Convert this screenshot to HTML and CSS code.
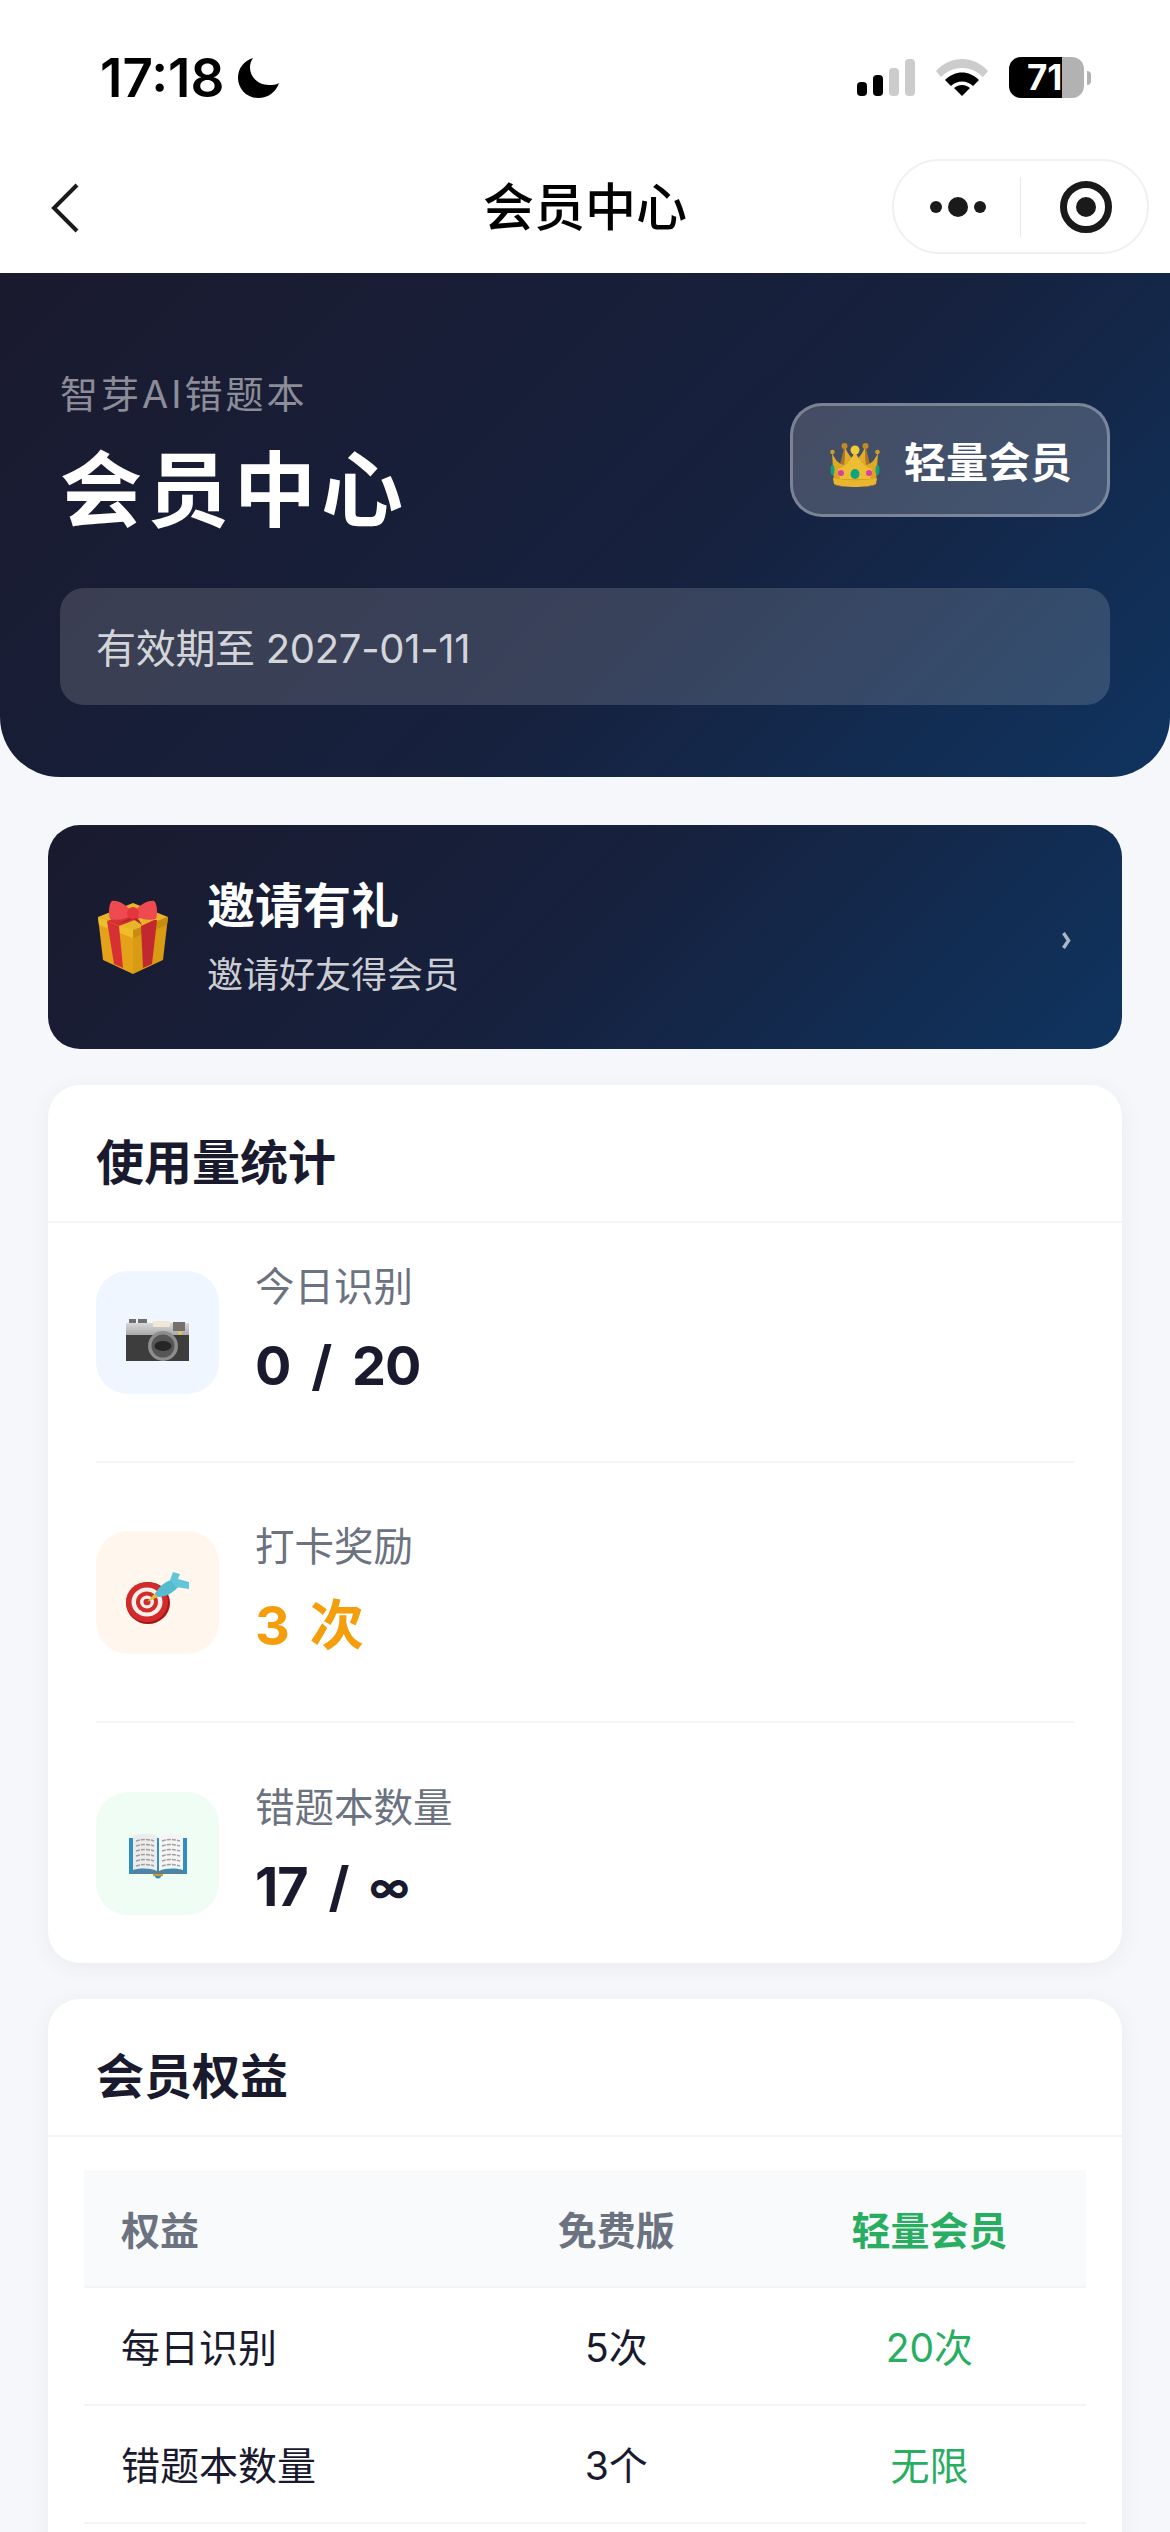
FILE: index.html
```html
<!DOCTYPE html>
<html lang="zh-CN">
<head>
<meta charset="utf-8">
<title>会员中心</title>
<link rel="stylesheet" href="styles.css">
</head>
<body>
<div class="screen">
  <header class="top">
    <div class="status">
      <div class="status-left">
        <span class="time">17:18</span>
        <svg class="moon" viewBox="0 0 41 40"><path d="M15 0C6 3 0 10 0 20c0 11 9 20 20 20 10 0 18-6 21-15-3 2-7 2-10 2C20 27 12 19 12 9c0-3 1-6 3-9z" fill="#000"/></svg>
      </div>
      <div class="status-right">
        <svg class="signal" viewBox="0 0 58 37"><rect x="0" y="23" width="10" height="14" rx="4" fill="#000"/><rect x="16" y="16" width="10" height="21" rx="4" fill="#000"/><rect x="32" y="9" width="10" height="28" rx="4" fill="#ccc"/><rect x="48" y="0" width="10" height="37" rx="4" fill="#ccc"/></svg>
        <svg class="wifi" viewBox="0 0 52 37"><path d="M0 12C14-4 38-4 52 12l-5 6C35 6 17 6 5 18z" fill="#ccc"/><path d="M9 21c10-10 24-10 34 0l-6 6c-6-6-16-6-22 0z" fill="#000"/><path d="M18 29c5-4 11-4 16 0L26 37z" fill="#000"/></svg>
        <div class="battery">
          <div class="battery-body"><span class="battery-level">71</span></div>
          <div class="battery-nub"></div>
        </div>
      </div>
    </div>
    <nav class="nav">
      <svg class="back" viewBox="0 0 28 50"><path d="M26 2 3 25l23 23" fill="none" stroke="#1a1a1a" stroke-width="4"/></svg>
      <div class="nav-title">会员中心</div>
      <div class="capsule">
        <div class="capsule-cell">
          <svg class="dots" viewBox="0 0 56 20"><circle cx="6" cy="10" r="6" fill="#1a1a1a"/><circle cx="28" cy="10" r="10" fill="#1a1a1a"/><circle cx="50" cy="10" r="6" fill="#1a1a1a"/></svg>
        </div>
        <div class="capsule-line"></div>
        <div class="capsule-cell">
          <svg class="record" viewBox="0 0 52 52"><circle cx="26" cy="26" r="22.5" fill="none" stroke="#1a1a1a" stroke-width="7"/><circle cx="26" cy="26" r="10" fill="#1a1a1a"/></svg>
        </div>
      </div>
    </nav>
  </header>

  <section class="hero">
    <div class="hero-head">
      <div>
        <div class="hero-sub">智芽AI错题本</div>
        <h1 class="hero-title">会员中心</h1>
      </div>
      <div class="badge">
        <svg class="crown" viewBox="0 0 50 44">
          <defs><linearGradient id="cg" x1="0" y1="0" x2="0" y2="1"><stop offset="0" stop-color="#e6b02c"/><stop offset="1" stop-color="#d99e22"/></linearGradient></defs>
          <path d="M8 30 14 5l11 14L36 5l6 25z" fill="#a9752a"/>
          <path d="M2 10c3 6 6 11 12 12 1-6 1-12 1-18 2 5 4 9 7 11l3-6 3 6c3-2 5-6 7-11 0 6 0 12 1 18 6-1 9-6 12-12l-2 30H4z" fill="url(#cg)"/>
          <path d="M25 9c5 9 9 15 17 17l-2 10H10L8 26c8-2 12-8 17-17z" fill="#edbd34"/>
          <path d="M3 35c9 3 35 3 44 0l-1 6c-8 4-34 4-42 0z" fill="#e8b62f"/>
          <path d="M4 41c8 4 34 4 42 0l-1 1c-8 3-32 3-40 0z" fill="#b9851f"/>
          <circle cx="25" cy="7" r="4.500" fill="#f2cd38"/><circle cx="14.500" cy="3" r="3" fill="#c08a24"/><circle cx="35.500" cy="3" r="3" fill="#c08a24"/><circle cx="2.500" cy="9" r="2.300" fill="#cf9a28"/><circle cx="47.500" cy="9" r="2.300" fill="#cf9a28"/>
          <ellipse cx="25" cy="31" rx="4.500" ry="5" fill="#13a37c"/><circle cx="11" cy="30" r="3" fill="#d63fa8"/><circle cx="39" cy="30" r="3" fill="#d63fa8"/><ellipse cx="2.500" cy="27" rx="2" ry="5" fill="#13a37c"/><ellipse cx="47.500" cy="27" rx="2" ry="5" fill="#13a37c"/>
        </svg>
        <span class="badge-text">轻量会员</span>
      </div>
    </div>
    <div class="expiry">有效期至 2027-01-11</div>
  </section>

  <main class="content">
    <section class="invite">
      <svg class="gift" viewBox="0 0 72 74">
        <path d="M1 17 36 29v45L6 60z" fill="#e3a21a"/>
        <path d="M71 17 36 29v45l30-14z" fill="#d99a14"/>
        <path d="M1 17 36 3l35 14-35 14z" fill="#e8b52a"/>
        <path d="M1 17l35 13v8L2 25z" fill="#f0bd2a"/>
        <path d="M71 17 36 30v8l34-13z" fill="#c98c10"/>
        <path d="M10 21l12 5 4 42-9-4z" fill="#d62f34"/>
        <path d="M44 26l13-6 3 0-5 44-9 4z" fill="#c4282f"/>
        <path d="M10 21 44 8l12 5-34 13z" fill="#d43136"/>
        <path d="M36 14C30 4 20 0 15 1c-3 2-4 12-2 18 6 2 18 0 23-5z" fill="#ee4a50"/>
        <path d="M36 14C42 4 52 0 57 1c3 2 4 12 2 18-6 2-18 0-23-5z" fill="#ee4a50"/>
        <path d="M36 16c-5 3-12 7-20 8l12-2 8-3 9 6-3-5z" fill="#b9242b"/>
        <circle cx="36" cy="13" r="6" fill="#e6363d"/>
      </svg>
      <div class="invite-text">
        <div class="invite-title">邀请有礼</div>
        <div class="invite-sub">邀请好友得会员</div>
      </div>
      <svg class="invite-arrow" viewBox="0 0 9 19"><path d="M1.500 2 6.500 9.500 1.500 17" fill="none" stroke="#fff" stroke-opacity=".65" stroke-width="3.500"/></svg>
    </section>

    <section class="card">
      <h2 class="card-title">使用量统计</h2>
      <div class="stats">
        <div class="stat">
          <div class="stat-icon blue">
            <svg class="emoji camera" viewBox="0 0 63 42">
              <defs><linearGradient id="cam" x1="0" y1="0" x2="0" y2="1"><stop offset="0" stop-color="#d8d8d8"/><stop offset="1" stop-color="#a9a9a9"/></linearGradient></defs>
              <rect x="3" y="0" width="7" height="5" fill="#6f6f6f"/><rect x="12" y="0" width="9" height="5" fill="#6f6f6f"/>
              <path d="M0 4h63v38H0z" fill="#3d3d3d"/><path d="M0 4h63v12H0z" fill="url(#cam)"/>
              <rect x="27" y="2" width="17" height="6" rx="1" fill="#f0e8d4"/><rect x="47" y="3" width="12" height="9" fill="#77706a"/>
              <circle cx="37" cy="27" r="15" fill="#8d8d8d"/><circle cx="37" cy="27" r="11.500" fill="#565656"/><ellipse cx="37" cy="27" rx="8.500" ry="5" fill="#262626"/><circle cx="54" cy="14" r="1.800" fill="#f3c233"/>
            </svg>
          </div>
          <div class="stat-body">
            <div class="stat-label">今日识别</div>
            <div class="stat-value">0 / 20</div>
          </div>
        </div>
        <div class="stat">
          <div class="stat-icon orange">
            <svg class="emoji target" viewBox="0 0 63 52">
              <ellipse cx="22" cy="31" rx="22" ry="21" fill="#a31519"/><ellipse cx="21" cy="30" rx="21" ry="20" fill="#d32a2c"/><ellipse cx="21" cy="30" rx="15.500" ry="14.500" fill="#f6f0ea"/><ellipse cx="21" cy="30" rx="11" ry="10.500" fill="#d32a2c"/><ellipse cx="21" cy="30" rx="7" ry="6.500" fill="#f6f0ea"/><ellipse cx="21" cy="30" rx="3.500" ry="3.200" fill="#d32a2c"/>
              <path d="M21 30l9-10 4 4z" fill="#dcc234"/>
              <path d="M29 22C33 14 40 9 48 7l4 8c-5 6-12 10-20 10z" fill="#55bbcf"/>
              <path d="M44 8 47 0l7 2-2 5 11 3v7l-13-2z" fill="#63c6d8"/>
            </svg>
          </div>
          <div class="stat-body">
            <div class="stat-label">打卡奖励</div>
            <div class="stat-value accent">3 次</div>
          </div>
        </div>
        <div class="stat">
          <div class="stat-icon green">
            <svg class="emoji book" viewBox="0 0 58 46">
              <path d="M0 5h58v36H33l-1 3c-2 2-4 2-6 0l-1-3H0z" fill="#2f8fc4"/>
              <path d="M3 38h52v2H33l-4 1-4-1H3z" fill="#777"/>
              <path d="M4 3C13 0 23 0 28 3v35C21 35 12 35 4 37z" fill="#ececec"/>
              <path d="M54 3C45 0 35 0 30 3v35C37 35 46 35 54 37z" fill="#f5f5f5"/>
              <path d="M7 8c6-2 13-2 18 0M7 13c6-2 13-2 18 0M7 18c6-2 13-2 18 0M7 23c6-2 13-2 18 0M7 28c6-2 13-2 18 0M7 33c6-2 13-2 18 0M33 8c5-2 12-2 18 0M33 13c5-2 12-2 18 0M33 18c5-2 12-2 18 0M33 23c5-2 12-2 18 0M33 28c5-2 12-2 18 0M33 33c5-2 12-2 18 0" fill="none" stroke="#a0a0a0" stroke-width="1.500" stroke-dasharray="4 1"/>
              <path d="M24 41h10v2h-10z" fill="#c9a02c"/>
            </svg>
          </div>
          <div class="stat-body">
            <div class="stat-label">错题本数量</div>
            <div class="stat-value">17 / <span class="inf">∞</span></div>
          </div>
        </div>
      </div>
    </section>

    <section class="card card-last">
      <h2 class="card-title">会员权益</h2>
      <div class="table">
        <div class="row head">
          <div class="first">权益</div><div class="center">免费版</div><div class="center vip">轻量会员</div>
        </div>
        <div class="row">
          <div class="first">每日识别</div><div class="center">5次</div><div class="center vip">20次</div>
        </div>
        <div class="row">
          <div class="first">错题本数量</div><div class="center">3个</div><div class="center vip">无限</div>
        </div>
      </div>
    </section>
  </main>
</div>
</body>
</html>
```
FILE: styles.css
```css
* { box-sizing: border-box; }
html, body { margin: 0; padding: 0; }
body {
  background: #f5f7fb;
  font-family: Inter, "Noto Sans CJK SC", sans-serif;
  color: #1a1a2e;
}
.screen { height: 2532px; overflow: hidden; }

.top { height: 273px; background: #fff; display: flex; flex-direction: column; }
.status { height: 159px; padding: 54px 79px 0 100px; display: flex; justify-content: space-between; align-items: flex-start; }
.status-left { display: flex; align-items: center; gap: 14px; }
.time { font-size: 53px; font-weight: 600; line-height: 48px; color: #000; }
.moon { width: 41px; height: 40px; }
.status-right { display: flex; align-items: flex-start; gap: 21px; padding-top: 3px; }
.signal { width: 58px; height: 37px; margin-top: 2px; }
.wifi { width: 52px; height: 37px; margin-top: 2px; }
.battery { display: flex; align-items: center; gap: 3px; }
.battery-body {
  width: 75px; height: 41px; border-radius: 12px;
  background: linear-gradient(90deg, #000 53px, #b2b2b2 53px);
  position: relative;
}
.battery-level {
  position: absolute; left: 18px; top: 0;
  font-size: 35px; line-height: 41px; font-weight: 700; color: #fff;
}
.battery-nub { width: 4px; height: 14px; background: #b2b2b2; border-radius: 0 4px 4px 0; }

.nav { height: 114px; position: relative; display: flex; align-items: flex-start; justify-content: center; }
.back { position: absolute; left: 51px; top: 24px; width: 28px; height: 50px; }
.nav-title { font-size: 51px; font-weight: 500; height: 95px; line-height: 97px; color: #000; }
.capsule {
  position: absolute; left: 892px; top: 0; width: 257px; height: 95px;
  border: 2px solid #f0f0f0; border-radius: 48px;
  display: flex; align-items: center; background: #fff;
}
.capsule-cell { flex: 1; display: flex; align-items: center; justify-content: center; }
.capsule-line { width: 1px; height: 60px; background: #e8e8e8; }
.dots { width: 56px; height: 20px; margin-left: 2px; }
.record { width: 52px; height: 52px; margin-left: 4px; }

.hero {
  height: 504px; padding: 94px 60px 72px;
  background: linear-gradient(135deg, #1a1a2e 0%, #16213e 58%, #0f3460 100%);
  border-radius: 0 0 60px 60px;
  display: flex; flex-direction: column; justify-content: space-between;
}
.hero-head { display: flex; justify-content: space-between; align-items: center; }
.hero-sub { font-size: 38px; line-height: 54px; letter-spacing: 3px; color: rgba(255,255,255,.5); }
.hero-title { margin: 20px 0 0; font-size: 82px; line-height: 100px; font-weight: 700; color: #fff; letter-spacing: 5px; }
.badge {
  width: 320px; height: 114px; margin-top: 11px;
  border: 3px solid rgba(255,255,255,.3); border-radius: 32px;
  background: rgba(255,255,255,.2);
  display: flex; align-items: center; gap: 24px; padding-left: 37px;
}
.crown { width: 50px; height: 44px; margin-top: 10px; }
.badge-text { font-size: 42px; font-weight: 600; color: #fff; }
.expiry {
  height: 117px; padding: 5px 0 0 36px; border-radius: 24px;
  background: rgba(255,255,255,.15);
  font-size: 40px; line-height: 112px; letter-spacing: -.3px; color: rgba(255,255,255,.8);
}

.content { padding: 48px 48px 0; display: flex; flex-direction: column; gap: 36px; }
.invite {
  height: 224px; border-radius: 32px; padding: 0 48px 0 49px;
  background: linear-gradient(135deg, #1a1a2e 0%, #16213e 50%, #0f3460 100%);
  display: flex; align-items: center;
}
.gift { width: 72px; height: 74px; margin-right: 38px; }
.invite-text { flex: 1; }
.invite-title { font-size: 48px; line-height: 64px; font-weight: 700; color: #fff; }
.invite-sub { font-size: 36px; line-height: 50px; margin-top: 12px; color: rgba(255,255,255,.8); }
.invite-arrow { width: 9px; height: 19px; margin: 6px 3px 0 0; }

.card { background: #fff; border-radius: 32px; box-shadow: 0 4px 24px rgba(26,26,46,.05); }
.card-title {
  margin: 0; height: 138px; padding: 22px 48px 0;
  border-bottom: 2px solid #f3f4f6;
  font-size: 48px; line-height: 112px; font-weight: 600; color: #1a1a2e;
}
.stats { padding: 0 48px; }
.stat { display: flex; align-items: center; gap: 36px; padding: 68px 0; border-bottom: 2px solid #f3f4f6; height: 260px; }
.stat:first-child { padding-top: 48px; height: 240px; }
.stat:last-child { padding-bottom: 48px; border-bottom: 0; height: 240px; }
.stat-icon { width: 123px; height: 123px; border-radius: 32px; display: flex; align-items: center; justify-content: center; flex: none; }
.blue { background: #eff6ff; }
.orange { background: #fff7ed; }
.green { background: #f0fdf4; }
.emoji { flex: none; }
.camera { width: 63px; height: 42px; margin-top: 16px; }
.target { width: 63px; height: 52px; margin-top: 12px; }
.book { width: 58px; height: 46px; margin-top: 6px; }
.stat-body { display: flex; flex-direction: column; }
.stat-label { font-size: 39.500px; line-height: 54px; color: #6b7280; margin-top: -2px; }
.stat-value { font-size: 54px; line-height: 72px; font-weight: 700; letter-spacing: -1px; word-spacing: 9px; margin-top: 16px; color: #1a1a2e; }
.inf { font-size: 41px; line-height: 1; vertical-align: 4px; }
.accent { color: #f59e0b; }

.card-last { min-height: 800px; }
.table { padding: 33px 36px 0; }
.row {
  display: grid; grid-template-columns: 1.2fr 1fr 1fr; align-items: center;
  height: 118px; padding-bottom: 3px;
  border-bottom: 2px solid #f3f4f6;
  font-size: 39px; color: #1a1a2e;
}
.row > .first { padding-left: 37px; }
.row > .center { text-align: center; }
.row.head { background: #f9fafb; font-weight: 700; color: #6b7280; padding-bottom: 1px; }
.row > .vip { color: #27ae60; }
```
